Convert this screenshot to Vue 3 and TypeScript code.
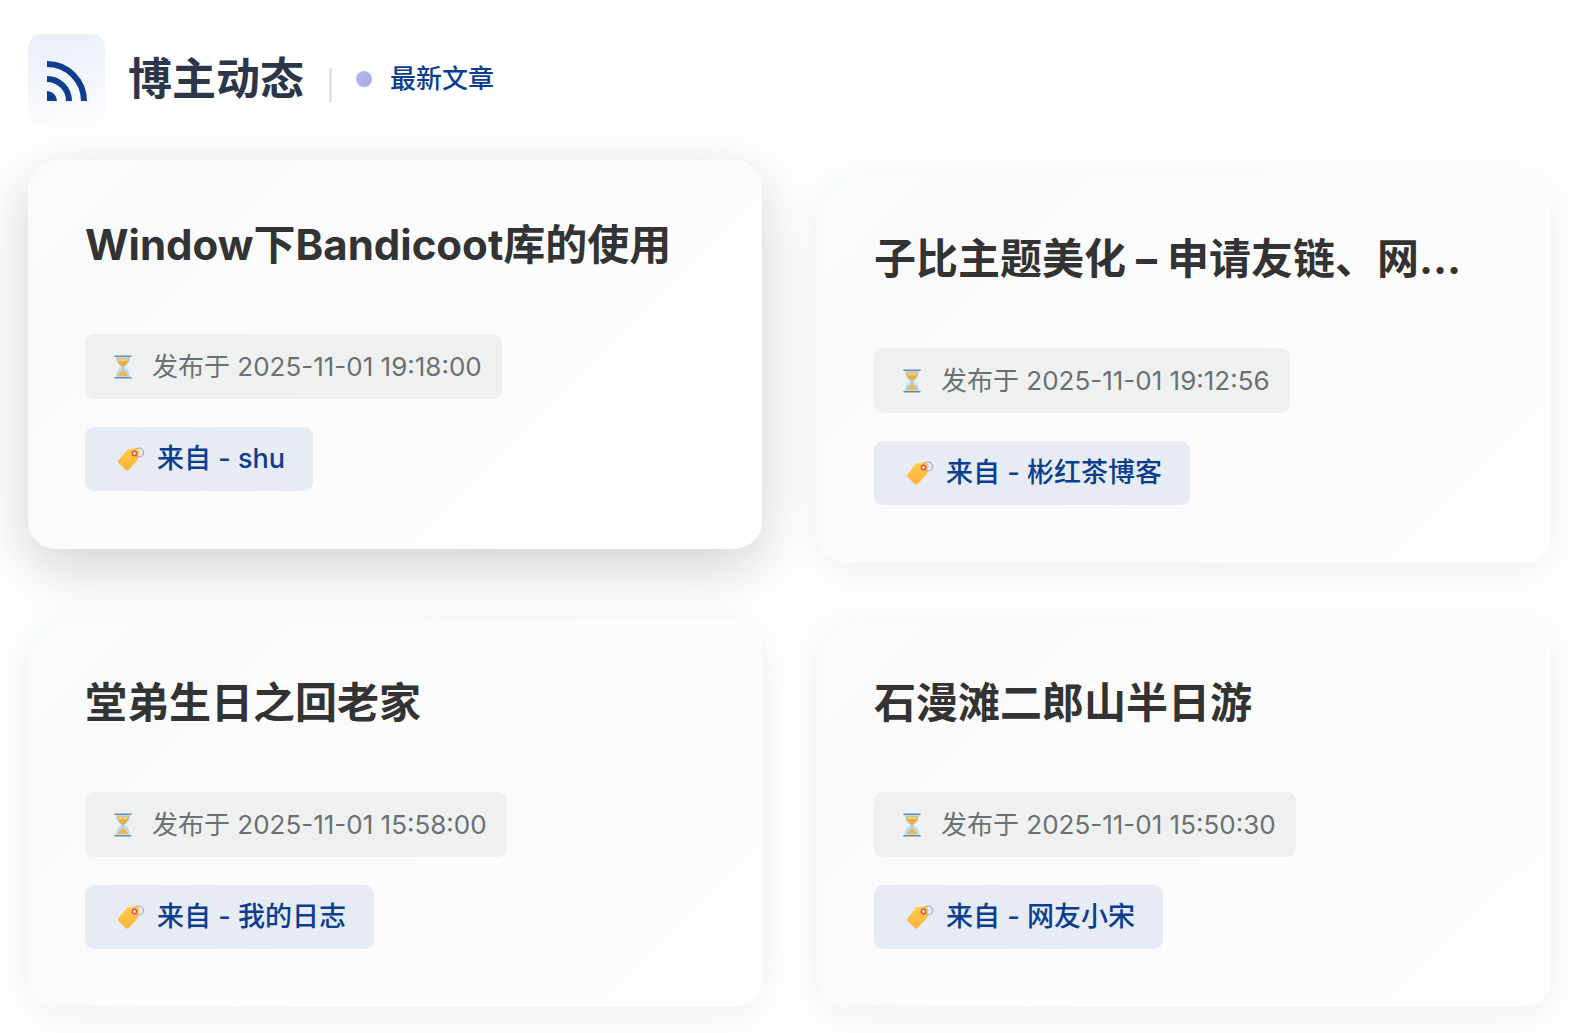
<script setup lang="ts">
interface Post {
  title: string
  date: string
  source: string
  active?: boolean
}

const posts: Post[] = [
  { title: 'Window下Bandicoot库的使用', date: '2025-11-01 19:18:00', source: 'shu', active: true },
  { title: '子比主题美化 – 申请友链、网…', date: '2025-11-01 19:12:56', source: '彬红茶博客' },
  { title: '堂弟生日之回老家', date: '2025-11-01 15:58:00', source: '我的日志' },
  { title: '石漫滩二郎山半日游', date: '2025-11-01 15:50:30', source: '网友小宋' },
]
</script>

<template>
  <main class="page">
    <header class="head">
      <span class="badge">
        <svg viewBox="0 0 40 40" width="40" height="40" aria-hidden="true">
          <path d="M0 30a10 10 0 0 1 10 10H0z" fill="#0b3d91" />
          <path d="M0 18a22 22 0 0 1 22 22M0 3a37 37 0 0 1 37 37" fill="none" stroke="#0b3d91" stroke-width="6" />
        </svg>
      </span>
      <h1>博主动态</h1>
      <span class="rule"></span>
      <span class="dot"></span>
      <span class="sub">最新文章</span>
    </header>

    <section class="grid">
      <article v-for="post in posts" :key="post.title" class="card" :class="{ active: post.active }">
        <h2>{{ post.title }}</h2>
        <p class="chip date">
          <svg viewBox="0 0 26 26" width="26" height="26" aria-hidden="true">
            <path d="M6 2.500h14c0 6-2.500 8-5 10.500 2.500 2.500 5 4.500 5 10.500H6c0-6 2.500-8 5-10.500C8.500 10.500 6 8.500 6 2.500z" fill="#b5dbf5" />
            <path d="M7 4.500h12c-.5 3.500-2.500 5.500-5 8h-2c-2.500-2.500-4.500-4.500-5-8z" fill="#e3ae45" />
            <path d="M12.400 12h1.200v5c2.400 1 4 2.500 4.400 5H8c.4-2.500 2-4 4.400-5z" fill="#edb65a" />
            <path d="M8 5.200h10l-1 2h-8z" fill="#f9d477" />
            <path d="M4.500 1.500h17v1.500h-17zM4.500 23h17v1.500h-17z" fill="#74899b" />
          </svg>
          <time :datetime="post.date">发布于 {{ post.date }}</time>
        </p>
        <p class="chip source">
          <svg viewBox="0 0 32 28" width="32" height="28" aria-hidden="true">
            <defs>
              <linearGradient id="tag" x1="0" y1="0" x2="0" y2="1">
                <stop offset="0" stop-color="#ffd04a" />
                <stop offset="1" stop-color="#fbb03b" />
              </linearGradient>
            </defs>
            <path d="M15 4.500 22 3c2.500-.3 4.500 1.500 4.300 4l-1 6.500c-.1.800-.5 1.500-1 2L15.500 25c-.8.800-1.800.8-2.600 0l-7.500-7c-.8-.8-.8-1.800 0-2.600l8-9.900c.4-.500.900-.900 1.600-1z" fill="url(#tag)" />
            <circle cx="26" cy="7.500" r="4.500" fill="none" stroke="#a9a3b8" stroke-width="1.200" />
            <circle cx="21.500" cy="8.500" r="2.200" fill="#f2eef2" stroke="#e35345" stroke-width="1.600" />
          </svg>
          <span>来自 - {{ post.source }}</span>
        </p>
      </article>
    </section>
  </main>
</template>

<style>
body {
  margin: 0;
  background: #fff;
}
</style>

<style scoped>
.page {
  padding: 34px 21px 26px 28px;
  overflow: hidden;
  font-family: Inter, 'Noto Sans CJK SC', sans-serif;
}

.head {
  display: flex;
  align-items: center;
  height: 93px;
}

.badge {
  display: flex;
  align-items: center;
  justify-content: center;
  width: 77px;
  height: 93px;
  border-radius: 14px;
  background: linear-gradient(170deg, #e9eef6, #f3f6fb 50%, #fdfdfe);
}

h1 {
  margin: 0 25px 4px 23px;
  font-size: 44px;
  line-height: 64px;
  font-weight: 700;
  color: #2d3548;
}

.rule {
  width: 3px;
  height: 34px;
  margin-top: 8px;
  background: #e4e5e8;
}

.dot {
  width: 16px;
  height: 16px;
  margin: 0 18px 4px 24px;
  border-radius: 50%;
  background: linear-gradient(135deg, #b9b8ee, #a3aae8);
}

.sub {
  margin-bottom: 4px;
  font-size: 26px;
  line-height: 40px;
  font-weight: 500;
  color: #0b3d91;
}

.grid {
  display: grid;
  grid-template-columns: repeat(2, minmax(0, 1fr));
  gap: 55px;
  margin-top: 47px;
}

.card {
  box-sizing: border-box;
  padding: 55px 57px 58px;
  border-radius: 28px;
  background: linear-gradient(135deg, #f8fbfd, #fafafb 16%, #fcfcfc 60%, #fdfdfd);
  box-shadow: 0 8px 40px rgba(30, 25, 60, 0.07);
}

.card.active {
  transform: translateY(-14px);
  background: linear-gradient(135deg, #f8fbfd, #fafafb 16%, #fcfcfd 60%, #fff);
  box-shadow: 0 18px 56px rgba(30, 20, 50, 0.2);
}

h2 {
  margin: 0 0 59px;
  overflow: hidden;
  font-size: 42px;
  line-height: 60px;
  font-weight: 700;
  color: #333;
  white-space: nowrap;
  text-overflow: ellipsis;
}

.chip {
  display: flex;
  align-items: center;
  width: fit-content;
  height: 65px;
  margin: 0;
  border-radius: 9px;
  white-space: nowrap;
}

.date {
  gap: 16px;
  padding: 0 20px 0 25px;
  background: #eff1f1;
  color: #6b7070;
  font-size: 26px;
  line-height: 40px;
}

.source {
  gap: 12px;
  height: 64px;
  margin-top: 28px;
  padding: 0 28px;
  background: #e7ebf4;
  color: #0b3d91;
  font-size: 27px;
  line-height: 40px;
  font-weight: 500;
}
</style>
